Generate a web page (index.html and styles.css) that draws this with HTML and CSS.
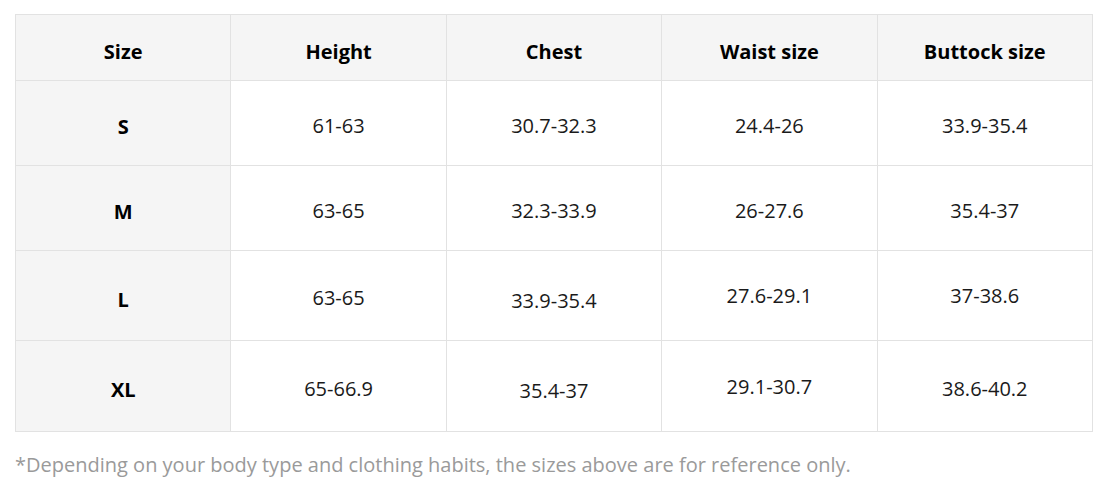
FILE: index.html
```html
<!DOCTYPE html>
<html lang="en">
<head>
<meta charset="utf-8">
<title>Size chart</title>
<link rel="stylesheet" href="styles.css">
</head>
<body>
<div class="chart">
  <table class="size-table">
    <thead>
      <tr class="row-head">
        <th>Size</th><th>Height</th><th>Chest</th><th>Waist size</th><th>Buttock size</th>
      </tr>
    </thead>
    <tbody>
      <tr class="row-s">
        <th>S</th><td>61-63</td><td>30.7-32.3</td><td>24.4-26</td><td>33.9-35.4</td>
      </tr>
      <tr class="row-m">
        <th>M</th><td>63-65</td><td>32.3-33.9</td><td>26-27.6</td><td>35.4-37</td>
      </tr>
      <tr class="row-l">
        <th>L</th><td>63-65</td><td class="low">33.9-35.4</td><td class="high">27.6-29.1</td><td class="high">37-38.6</td>
      </tr>
      <tr class="row-xl">
        <th>XL</th><td>65-66.9</td><td class="low">35.4-37</td><td class="high">29.1-30.7</td><td>38.6-40.2</td>
      </tr>
    </tbody>
  </table>
  <p class="note">*Depending on your body type and clothing habits, the sizes above are for reference only.</p>
</div>
</body>
</html>
```
FILE: styles.css
```css
html, body {
  margin: 0;
  padding: 0;
  background: #ffffff;
}
body {
  font-family: "Open Sans", "Noto Sans", "Liberation Sans", sans-serif;
  color: #111111;
}
.chart {
  padding: 14px 9px 0 15px;
}
.size-table {
  border-collapse: collapse;
  table-layout: fixed;
  width: 1078px;
}
.size-table th,
.size-table td {
  border: 1px solid #e2e2e2;
  text-align: center;
  vertical-align: middle;
  padding: 0;
  font-size: 20px;
  line-height: 1.3;
}
.size-table th {
  font-weight: 700;
  background: #f5f5f5;
  color: #000;
  padding-top: 8px;
}
.row-head th {
  padding-top: 9px;
}
.size-table td {
  font-weight: 400;
  background: #fff;
  color: #1a1a1a;
  padding-top: 5px;
}
.size-table td.low { padding-top: 10px; }
.size-table td.high { padding-top: 1px; }
.row-head { height: 66px; }
.row-s { height: 85px; }
.row-m { height: 85px; }
.row-l { height: 90px; }
.row-xl { height: 91px; }
.note {
  margin: 20px 0 0 0;
  font-size: 20px;
  line-height: 1.3;
  color: #9a9a9a;
}
```
